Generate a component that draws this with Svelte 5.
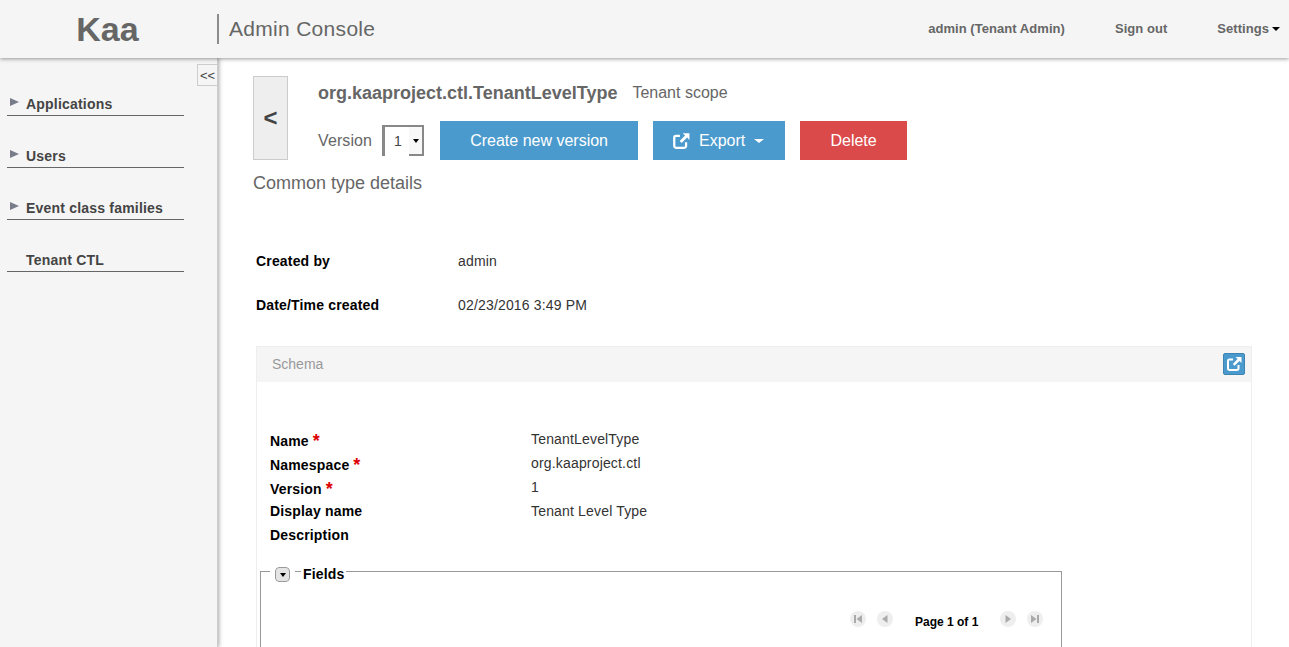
<script lang="ts">
	const nav = [
		{ label: 'Applications', arrow: true },
		{ label: 'Users', arrow: true },
		{ label: 'Event class families', arrow: true },
		{ label: 'Tenant CTL', arrow: false }
	]

	const schema_rows = [
		{ label: 'Name', value: 'TenantLevelType', required: true },
		{ label: 'Namespace', value: 'org.kaaproject.ctl', required: true },
		{ label: 'Version', value: '1', required: true },
		{ label: 'Display name', value: 'Tenant Level Type', required: false },
		{ label: 'Description', value: '', required: false }
	]
</script>

{#snippet export_icon(size)}
	<svg width={size} height={size} viewBox="0 0 16 16" aria-hidden="true">
		<path
			d="M7 3.5H3.5A1.5 1.5 0 0 0 2 5v7.5A1.5 1.5 0 0 0 3.5 14H11a1.5 1.5 0 0 0 1.5-1.5V9"
			fill="none"
			stroke="#fff"
			stroke-width="2"
		/>
		<path d="M9.5 1H15.5V7L13.4 4.9 8.6 9.7 6.8 7.9 11.6 3.1Z" fill="#fff" />
	</svg>
{/snippet}

<div class="page">
	<header class="topbar">
		<div class="brand">Kaa</div>
		<div class="title">Admin Console</div>
		<nav class="user_nav">
			<span class="user">admin (Tenant Admin)</span>
			<span class="signout">Sign out</span>
			<span class="settings">Settings<i class="caret"></i></span>
		</nav>
	</header>

	<div class="body_row">
		<aside class="sidebar">
			<button class="collapse">&lt;&lt;</button>
			<ul class="nav_list">
				{#each nav as item}
					<li class="nav_item">
						<span class="arrow" class:hidden={!item.arrow}></span>
						<span>{item.label}</span>
					</li>
				{/each}
			</ul>
		</aside>

		<main class="content">
			<div class="head">
				<button class="back">&lt;</button>
				<div class="head_main">
					<div class="name_row">
						<span class="ctl_name">org.kaaproject.ctl.TenantLevelType</span>
						<span class="scope">Tenant scope</span>
					</div>
					<div class="action_row">
						<span class="version_label">Version</span>
						<div class="version_select">
							<span class="version_value">1</span>
							<span class="select_btn"><i class="caret"></i></span>
						</div>
						<button class="btn create">Create new version</button>
						<button class="btn export">
							{@render export_icon(18)}
							<span>Export</span>
							<i class="caret white"></i>
						</button>
						<button class="btn delete">Delete</button>
					</div>
				</div>
			</div>

			<h2 class="details_title">Common type details</h2>

			<div class="meta">
				<div class="meta_row">
					<b>Created by</b>
					<span>admin</span>
				</div>
				<div class="meta_row">
					<b>Date/Time created</b>
					<span>02/23/2016 3:49 PM</span>
				</div>
			</div>

			<section class="panel">
				<div class="panel_head">
					<span>Schema</span>
					<button class="open_btn" aria-label="open schema">{@render export_icon(16)}</button>
				</div>
				<div class="panel_body">
					<div class="schema_rows">
						{#each schema_rows as row}
							<div class="schema_row" class:req={row.required}>
								<div class="schema_label">
									{row.label}{#if row.required}<span class="star">*</span>{/if}
								</div>
								<div class="schema_value">{row.value}</div>
							</div>
						{/each}
					</div>

					<fieldset class="fields">
						<button class="toggle" aria-label="collapse fields"><i class="caret"></i></button>
						<legend>Fields</legend>
						<div class="pager">
							<span class="page_btn"><svg width="8" height="8" viewBox="0 0 8 8"><path d="M0 0h2v8H0zM8 0v8L2.5 4z" /></svg></span>
							<span class="page_btn"><svg width="8" height="8" viewBox="0 0 8 8"><path d="M6.5 0v8L1 4z" /></svg></span>
							<span class="page_text">Page 1 of 1</span>
							<span class="page_btn"><svg width="8" height="8" viewBox="0 0 8 8"><path d="M1.5 0v8L7 4z" /></svg></span>
							<span class="page_btn"><svg width="8" height="8" viewBox="0 0 8 8"><path d="M0 0v8l5.5-4zM6 0h2v8H6z" /></svg></span>
						</div>
					</fieldset>
				</div>
			</section>
		</main>
	</div>
</div>

<style>
	:global(body) {
		margin: 0;
		overflow: hidden;
		background: #fff;
	}

	.page {
		height: 647px;
		overflow: hidden;
		display: flex;
		flex-direction: column;
		font-family: 'Liberation Sans', Arial, sans-serif;
		color: #000;
	}

	button {
		font-family: inherit;
		cursor: pointer;
	}

	.caret {
		display: inline-block;
		width: 0;
		height: 0;
		border-left: 4px solid transparent;
		border-right: 4px solid transparent;
		border-top: 4px solid #000;
	}

	.caret.white {
		border-top-color: #fff;
		border-left-width: 5px;
		border-right-width: 5px;
		border-top-width: 4px;
	}

	/* top bar */
	.topbar {
		position: relative;
		z-index: 2;
		height: 58px;
		flex: none;
		display: flex;
		align-items: center;
		background: #f5f5f5;
		box-shadow: 0 1px 4px rgba(0, 0, 0, 0.4);
	}

	.brand {
		width: 215px;
		text-align: center;
		font-size: 34px;
		font-weight: bold;
		color: #666;
	}

	.title {
		height: 30px;
		line-height: 30px;
		margin-left: 2px;
		padding-left: 10px;
		border-left: 2px solid #8c8c8c;
		font-size: 21px;
		letter-spacing: 0.3px;
		color: #666;
	}

	.user_nav {
		margin-left: auto;
		margin-bottom: 2px;
		display: flex;
		align-items: center;
		padding-right: 9px;
		font-size: 13px;
		letter-spacing: 0.05px;
		font-weight: bold;
		color: #666;
	}

	.signout {
		margin-left: 50px;
	}

	.settings {
		margin-left: 50px;
	}

	.settings .caret {
		margin-left: 3px;
		vertical-align: 2px;
	}

	/* sidebar */
	.body_row {
		flex: 1;
		display: flex;
		min-height: 0;
	}

	.sidebar {
		position: relative;
		z-index: 1;
		width: 218px;
		flex: none;
		box-sizing: border-box;
		background: #f5f5f5;
		border-right: 1px solid #ccc;
		box-shadow: 1px 0 4px rgba(0, 0, 0, 0.35);
	}

	.collapse {
		position: absolute;
		top: 6px;
		right: -1px;
		width: 21px;
		height: 22px;
		padding: 0;
		background: #f5f5f5;
		border: 1px solid #ccc;
		font-size: 13px;
		color: #444;
	}

	.nav_list {
		list-style: none;
		margin: 0;
		padding: 30px 0 0 7px;
	}

	.nav_item {
		box-sizing: border-box;
		width: 177px;
		height: 28px;
		margin-bottom: 24px;
		display: flex;
		align-items: flex-end;
		padding-bottom: 3px;
		border-bottom: 1px solid #666;
		font-size: 14px;
		letter-spacing: 0.2px;
		font-weight: bold;
		color: #444;
	}

	.arrow {
		width: 0;
		height: 0;
		margin: 0 7px 6px 3px;
		border-top: 4.5px solid transparent;
		border-bottom: 4.5px solid transparent;
		border-left: 9px solid #777c88;
	}

	.arrow.hidden {
		visibility: hidden;
	}

	/* main */
	.content {
		flex: 1;
		min-width: 0;
		padding: 18px 37px 0 35px;
	}

	.head {
		display: flex;
	}

	.back {
		width: 35px;
		height: 84px;
		padding: 0;
		background: #eee;
		border: 1px solid #ccc;
		font-size: 24px;
		font-weight: bold;
		color: #444;
	}

	.head_main {
		margin-left: 30px;
	}

	.name_row {
		height: 33px;
		display: flex;
		align-items: center;
	}

	.ctl_name {
		padding-top: 2px;
		font-size: 18px;
		font-weight: bold;
		color: #666;
	}

	.scope {
		margin-left: 15px;
		font-size: 16px;
		color: #666;
	}

	.action_row {
		margin-top: 12px;
		height: 39px;
		display: flex;
		align-items: center;
	}

	.version_label {
		font-size: 16px;
		letter-spacing: 0.1px;
		color: #666;
	}

	.version_select {
		box-sizing: border-box;
		width: 42px;
		height: 31px;
		margin-left: 10px;
		padding-left: 9px;
		display: flex;
		align-items: center;
		justify-content: space-between;
		border: solid #888;
		border-width: 2px 2px 0 3px;
		font-size: 14px;
		color: #444;
	}

	.version_value {
		padding-bottom: 2px;
	}

	.select_btn {
		box-sizing: border-box;
		width: 13px;
		height: 100%;
		display: flex;
		align-items: center;
		justify-content: center;
		background: #f8f8f8;
		border-bottom: 2px solid #888;
	}

	.select_btn .caret {
		border-left-width: 3.5px;
		border-right-width: 3.5px;
	}

	.btn {
		height: 39px;
		padding: 0;
		border: 0;
		color: #fff;
		font-size: 16px;
		display: flex;
		align-items: center;
		justify-content: center;
	}

	.create {
		width: 198px;
		margin-left: 16px;
		background: #4b9acd;
	}

	.export {
		width: 132px;
		margin-left: 15px;
		padding-right: 2px;
		background: #4b9acd;
	}

	.export span {
		margin: 0 9px;
	}

	.delete {
		width: 107px;
		margin-left: 15px;
		background: #db4a4a;
	}

	.details_title {
		margin: 13px 0 0;
		font-size: 18px;
		line-height: 21px;
		font-weight: normal;
		color: #666;
	}

	.meta {
		margin-top: 58px;
		padding-left: 3px;
	}

	.meta_row {
		height: 44px;
		display: flex;
		font-size: 14px;
		letter-spacing: 0.17px;
		line-height: 18px;
	}

	.meta_row b {
		width: 202px;
	}

	.meta_row span {
		color: #333;
	}

	.panel {
		margin: 6px 0 0 3px;
		border: 1px solid #eee;
	}

	.panel_head {
		box-sizing: border-box;
		height: 35px;
		display: flex;
		align-items: center;
		justify-content: space-between;
		padding: 0 6px 2px 15px;
		background: #f5f5f5;
		font-size: 14px;
		color: #999;
	}

	.open_btn {
		width: 22px;
		height: 22px;
		padding: 0;
		display: flex;
		align-items: center;
		justify-content: center;
		background: #4b9acd;
		border: 1px solid #3d84b3;
		border-radius: 2px;
	}

	.panel_body {
		padding: 48px 0 0 3px;
	}

	.schema_rows {
		padding-left: 10px;
	}

	.schema_row {
		height: 24px;
		display: flex;
		font-size: 14px;
		letter-spacing: 0.17px;
		line-height: 18px;
	}

	.schema_label {
		width: 261px;
		font-weight: bold;
		padding-top: 2px;
		white-space: nowrap;
	}

	.schema_row:not(.req) .schema_label {
		padding-top: 0;
	}

	.schema_value {
		color: #333;
	}

	.star {
		position: relative;
		top: 1px;
		margin-left: 4px;
		color: #d00;
		font-size: 18px;
		line-height: 10px;
	}

	.fields {
		position: relative;
		box-sizing: border-box;
		width: 802px;
		height: 120px;
		margin: 10px 0 0;
		padding: 0;
		border: 1px solid #999;
		min-width: 0;
	}

	.fields legend {
		margin-left: 40px;
		padding: 6px 2px 0;
		font-size: 14px;
		letter-spacing: 0.17px;
		font-weight: bold;
		line-height: 16px;
	}

	.toggle {
		position: absolute;
		top: -15px;
		left: 14px;
		box-sizing: border-box;
		width: 15px;
		height: 15px;
		padding: 0;
		display: flex;
		align-items: center;
		justify-content: center;
		background: #e4e4e4;
		border: 1px solid #999;
		border-radius: 4px;
		outline: 5px solid #fff;
	}

	.toggle .caret {
		border-left-width: 3.5px;
		border-right-width: 3.5px;
	}

	.pager {
		margin-top: 29px;
		padding-left: 589px;
		display: flex;
		align-items: flex-start;
		font-size: 12px;
		font-weight: bold;
	}

	.page_btn {
		width: 16px;
		height: 16px;
		margin-right: 11px;
		border-radius: 50%;
		background: #eee;
		display: flex;
		align-items: center;
		justify-content: center;
		fill: #aaa;
	}

	.page_text {
		width: 87px;
		margin-left: 11px;
		margin-right: -2px;
		padding-top: 4px;
	}
</style>
